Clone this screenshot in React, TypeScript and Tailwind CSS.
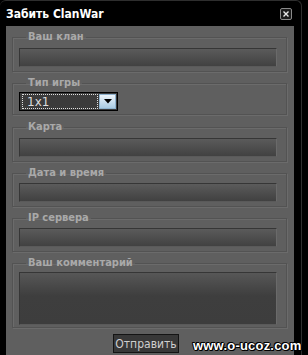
import React from "react";

const labelFont = { fontFamily: '"DejaVu Sans Condensed", "DejaVu Sans", Tahoma, sans-serif' };

function Field({
  label,
  mt,
  pt,
  pb,
  children,
}: {
  label: string;
  mt: string;
  pt: string;
  pb: string;
  children: React.ReactNode;
}) {
  return (
    <fieldset
      className={`${mt} ${pt} ${pb} pl-[6px] pr-[9px] border border-[#535353] shadow-[inset_1px_1px_0_#6b6b6b,1px_1px_0_#6b6b6b]`}
    >
      <legend
        className="ml-[7px] px-[2px] text-[11px] leading-[12px] font-bold text-[#a9a9a9]"
        style={labelFont}
      >
        {label}
      </legend>
      {children}
    </fieldset>
  );
}

function Input() {
  return (
    <div className="h-[19px] border border-[#363636] border-r-[#6a6a6a] border-b-[#5a5a5a] bg-gradient-to-b from-[#5b5b5b] to-[#414141]" />
  );
}

export default function App() {
  return (
    <div className="relative w-[308px] h-[355px] bg-black overflow-hidden">
      <div className="w-[302px] h-full bg-black rounded-t-[6px] border-t border-r border-[#2e2e2e] flex flex-col">
        <div className="h-[25px] flex items-center justify-between pl-[6px] pr-[9px]">
          <span
            className="text-white font-bold text-[12px] leading-none"
            style={labelFont}
          >
            Забить ClanWar
          </span>
          <div className="w-[12px] h-[12px] border border-[#8a8a8a] rounded-[2px] bg-[#1a1a1a] flex items-center justify-center">
            <svg width="8" height="8" viewBox="0 0 8 8">
              <path d="M1.5 1.5 L6.5 6.5 M6.5 1.5 L1.5 6.5" stroke="#e8e8e8" strokeWidth="1.4" />
            </svg>
          </div>
        </div>
        <div className="ml-[6px] w-[288px] flex-1 bg-[#5f5f5f] flex flex-col pl-[6px] pr-[7px]">
          <Field label="Ваш клан" mt="mt-[5px]" pt="pt-[5px]" pb="pb-[4px]">
            <Input />
          </Field>
          <Field label="Тип игры" mt="mt-[5px]" pt="pt-[3px]" pb="pb-[3px]">
            <div className="w-[99px] h-[19px] border border-black bg-[#3b3b3b] flex items-center p-[1px]">
              <div className="flex-1 h-full border border-dotted border-[#e0e0e0] ml-[1px] mr-[1px] flex items-center pl-[4px]">
                <span
                  className="text-[#dcdcdc] text-[12px] leading-none"
                  style={{ fontFamily: '"DejaVu Sans", Tahoma, sans-serif' }}
                >
                  1x1
                </span>
              </div>
              <div className="w-[17px] h-full bg-gradient-to-b from-[#eef5fb] to-[#a9cbe3] border border-[#8fb3cf] flex items-center justify-center">
                <svg width="8" height="5" viewBox="0 0 8 5">
                  <path d="M0 0 H8 L4 4.5 Z" fill="#000" />
                </svg>
              </div>
            </div>
          </Field>
          <Field label="Карта" mt="mt-[6px]" pt="pt-[5px]" pb="pb-[4px]">
            <Input />
          </Field>
          <Field label="Дата и время" mt="mt-[5px]" pt="pt-[4px]" pb="pb-[4px]">
            <Input />
          </Field>
          <Field label="IP сервера" mt="mt-[5px]" pt="pt-[4px]" pb="pb-[4px]">
            <Input />
          </Field>
          <Field label="Ваш комментарий" mt="mt-[5px]" pt="pt-[3px]" pb="pb-[2px]">
            <div className="h-[53px] border border-[#363636] border-r-[#6a6a6a] border-b-[#5a5a5a] bg-gradient-to-b from-[#575757] via-[#3e3e3e] via-45% to-[#3d3d3d]" />
          </Field>
          <button
            className="mt-[6px] ml-[101px] self-start w-[66px] h-[19px] border border-[#141414] bg-[#383838] text-[#cfcfcf] text-[12px] leading-none flex items-center justify-center"
            style={{ fontFamily: '"DejaVu Sans Condensed", "DejaVu Sans", Tahoma, sans-serif' }}
          >
            Отправить
          </button>
        </div>
      </div>
      <div
        className="absolute left-[193px] top-[339px] text-white font-bold text-[13px] leading-none whitespace-nowrap tracking-[0.2px] [text-shadow:1px_0_0_#000,-1px_0_0_#000,0_1px_0_#000,0_-1px_0_#000,1px_1px_0_#000,-1px_-1px_0_#000]"
        style={{ fontFamily: '"Liberation Sans", Arial, sans-serif' }}
      >
        www.o-ucoz.com
      </div>
    </div>
  );
}
